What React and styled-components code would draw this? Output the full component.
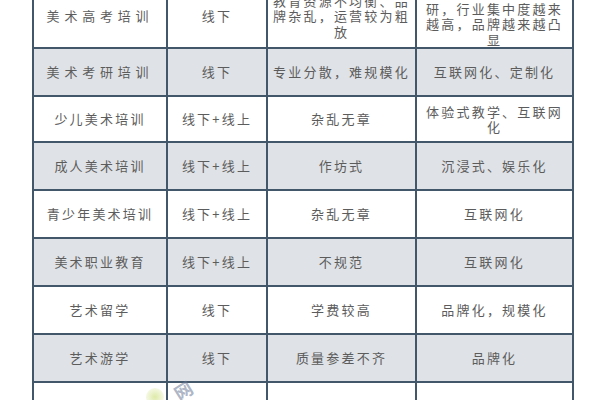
import React from 'react';
import styled, { createGlobalStyle } from 'styled-components';

const GlobalStyle = createGlobalStyle`
  html, body {
    margin: 0;
    padding: 0;
    background: #ffffff;
  }
  body {
    width: 600px;
    height: 400px;
    overflow: hidden;
    font-family: "Noto Sans CJK SC", "Noto Sans", sans-serif;
  }
`;

const Page = styled.div`
  position: relative;
  width: 600px;
  height: 400px;
  overflow: hidden;
  padding-left: 32px;
  box-sizing: border-box;
`;

// table drawn as a grid: the dark background shows through the 2px gaps as rules
const Grid = styled.div`
  margin-top: -17px;
  display: grid;
  grid-template-columns: 132px 98px 147px 155px;
  grid-template-rows: 62px 46px 44px 46px 46px 46px 46px 46px 46px;
  gap: 2px;
  padding: 2px;
  width: max-content;
  background: #43576a;
`;

const Cell = styled.div`
  display: flex;
  align-items: ${(p) => (p.$bottom ? 'flex-end' : 'center')};
  justify-content: center;
  text-align: center;
  padding: 0 4px;
  background: ${(p) => (p.$shaded ? '#dfe2e6' : '#ffffff')};
  font-size: 13px;
  line-height: 15.5px;
  color: #5c5c5c;
  letter-spacing: ${(p) => (p.$wide ? '4.8px' : '2.2px')};
  white-space: nowrap;
  overflow: hidden;
`;

const Watermark = styled.div`
  position: absolute;
  left: 174px;
  top: 377px;
  font-size: 18px;
  font-weight: 700;
  color: rgba(105, 120, 150, 0.55);
  transform: rotate(-32deg);
`;

const Blob = styled.div`
  position: absolute;
  left: 146px;
  top: 388px;
  width: 18px;
  height: 18px;
  border-radius: 50%;
  background: radial-gradient(circle, rgba(200, 220, 110, 0.6), rgba(200, 220, 110, 0));
`;

const rows = [
  {
    cells: [
      '美术高考培训',
      '线下',
      ['教育资源不均衡、品', '牌杂乱，运营较为粗', '放'],
      ['研，行业集中度越来', '越高，品牌越来越凸', '显'],
    ],
    wide: true,
    bottomLast: true,
  },
  { cells: ['美术考研培训', '线下', '专业分散，难规模化', '互联网化、定制化'], shaded: true, wide: true },
  { cells: ['少儿美术培训', '线下+线上', '杂乱无章', ['体验式教学、互联网', '化']] },
  { cells: ['成人美术培训', '线下+线上', '作坊式', '沉浸式、娱乐化'], shaded: true },
  { cells: ['青少年美术培训', '线下+线上', '杂乱无章', '互联网化'] },
  { cells: ['美术职业教育', '线下+线上', '不规范', '互联网化'], shaded: true },
  { cells: ['艺术留学', '线下', '学费较高', '品牌化，规模化'] },
  { cells: ['艺术游学', '线下', '质量参差不齐', '品牌化'], shaded: true },
  { cells: ['', '', '', ''] },
];

const renderText = (text) =>
  Array.isArray(text) ? (
    <span>
      {text.map((line, i) => (
        <React.Fragment key={i}>
          {i > 0 && <br />}
          {line}
        </React.Fragment>
      ))}
    </span>
  ) : (
    text
  );

export default function App() {
  return (
    <>
      <GlobalStyle />
      <Page>
        <Grid>
          {rows.map((row, i) =>
            row.cells.map((c, j) => (
              <Cell
                key={`${i}-${j}`}
                $shaded={row.shaded}
                $wide={row.wide && j === 0}
                $bottom={row.bottomLast && j === 3}
              >
                {renderText(c)}
              </Cell>
            ))
          )}
        </Grid>
        <Blob />
        <Watermark>网</Watermark>
      </Page>
    </>
  );
}
